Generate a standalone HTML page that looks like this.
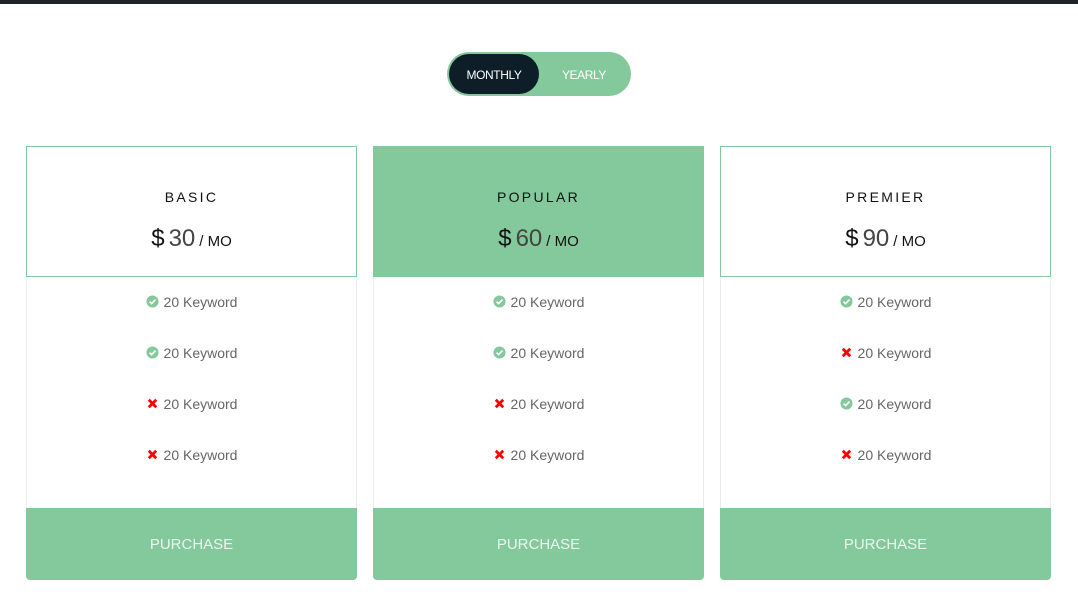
<!DOCTYPE html>
<html><head><style>
*{margin:0;padding:0;box-sizing:border-box}
body{width:1078px;height:615px;background:#fff;font-family:"Liberation Sans",sans-serif;position:relative;overflow:hidden}
.top{position:absolute;left:0;top:0;width:1078px;height:4px;background:#1f2326}
.tog{position:absolute;left:447px;top:52px;width:184px;height:44px;border-radius:22px;background:#84c99b}
.tog .m{position:absolute;left:2px;top:2px;width:90px;height:40px;border-radius:20px;background:#0e1e29;color:#fff;font-size:12px;line-height:42px;text-align:center;letter-spacing:-0.4px}
.tog .y{position:absolute;left:92px;top:2px;width:90px;height:40px;color:#fff;font-size:12px;line-height:42px;text-align:center;letter-spacing:-0.4px}
.card{position:absolute;top:146px;width:331px;height:434px;border:1px solid #ececec;border-radius:0 0 4px 4px}
.hd{position:absolute;left:-1px;top:-1px;width:331px;height:131px;border:1px solid #84c99b;background:#fff;text-align:center}
.pop .hd{background:#84c99b}
.nm{position:absolute;top:42px;width:100%;font-size:14px;letter-spacing:2.3px;color:#111}
.pr{position:absolute;top:78px;width:100%;font-size:24px;color:#111}
.pr .n{color:#444;margin-left:4px}
.pr .mo{font-size:15px;margin-left:4px}
.it{position:absolute;width:100%;text-align:center;font-size:14px;color:#666}
.ft{position:absolute;left:-1px;bottom:-1px;width:331px;height:72px;background:#84c99b;font-size:15px;text-align:center;line-height:74px;color:#eef5ee;border-radius:0 0 4px 4px}
.ic{display:inline-block;width:13px;height:13px;vertical-align:-1px;margin-right:5px}
</style></head><body>
<div class="top"></div>
<div class="tog"><div class="m">MONTHLY</div><div class="y">YEARLY</div></div>
<svg width="0" height="0" style="position:absolute"><defs>
<symbol id="ok" viewBox="0 0 14 14"><circle cx="7" cy="7" r="6.5" fill="#84c99b"/><path d="M3.8 7.2 6 9.3 10.2 5" stroke="#fff" stroke-width="1.8" fill="none"/></symbol>
<symbol id="no" viewBox="0 0 14 14"><path d="M3 3 11 11M11 3 3 11" stroke="#f00" stroke-width="3"/></symbol>
</defs></svg>

<div class="card" style="left:26px">
<div class="hd"><div class="nm">BASIC</div><div class="pr">$<span class="n">30</span><span class="mo">/ MO</span></div></div>
<div class="it" style="top:147px"><svg class="ic"><use href="#ok"/></svg>20 Keyword</div>
<div class="it" style="top:198px"><svg class="ic"><use href="#ok"/></svg>20 Keyword</div>
<div class="it" style="top:249px"><svg class="ic"><use href="#no"/></svg>20 Keyword</div>
<div class="it" style="top:300px"><svg class="ic"><use href="#no"/></svg>20 Keyword</div>
<div class="ft">PURCHASE</div></div>

<div class="card pop" style="left:373px">
<div class="hd"><div class="nm">POPULAR</div><div class="pr">$<span class="n">60</span><span class="mo">/ MO</span></div></div>
<div class="it" style="top:147px"><svg class="ic"><use href="#ok"/></svg>20 Keyword</div>
<div class="it" style="top:198px"><svg class="ic"><use href="#ok"/></svg>20 Keyword</div>
<div class="it" style="top:249px"><svg class="ic"><use href="#no"/></svg>20 Keyword</div>
<div class="it" style="top:300px"><svg class="ic"><use href="#no"/></svg>20 Keyword</div>
<div class="ft">PURCHASE</div></div>

<div class="card" style="left:720px">
<div class="hd"><div class="nm">PREMIER</div><div class="pr">$<span class="n">90</span><span class="mo">/ MO</span></div></div>
<div class="it" style="top:147px"><svg class="ic"><use href="#ok"/></svg>20 Keyword</div>
<div class="it" style="top:198px"><svg class="ic"><use href="#no"/></svg>20 Keyword</div>
<div class="it" style="top:249px"><svg class="ic"><use href="#ok"/></svg>20 Keyword</div>
<div class="it" style="top:300px"><svg class="ic"><use href="#no"/></svg>20 Keyword</div>
<div class="ft">PURCHASE</div></div>
</body></html>
